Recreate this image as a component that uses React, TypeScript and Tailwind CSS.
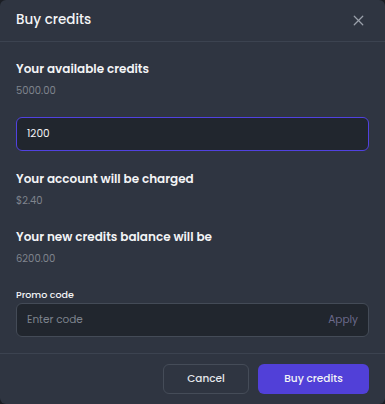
import { X } from "lucide-react";

const font = { fontFamily: "Poppins, Inter, 'Noto Sans', sans-serif" };

function Stat({ label, value }: { label: string; value: string }) {
  return (
    <div>
      <div className="text-[12px] leading-5 font-semibold text-[#f3f4f6]">{label}</div>
      <div className="mt-1 text-[10px] leading-4 text-[#7f848d]">{value}</div>
    </div>
  );
}

export default function App() {
  return (
    <div className="w-[385px] h-[404px] bg-[#1b1e24]" style={font}>
      <div className="flex h-full flex-col overflow-hidden rounded-md bg-[#2f3541]">
        {/* header */}
        <div className="flex h-[42px] shrink-0 items-center justify-between border-b border-[#3c4350] pl-4 pr-[18px]">
          <span className="text-[13.5px] font-medium text-[#f3f4f6]">Buy credits</span>
          <X size={17} strokeWidth={1.75} className="text-[#9aa0aa]" />
        </div>

        {/* body */}
        <div className="flex flex-1 flex-col px-4 pt-[17px]">
          <Stat label="Your available credits" value="5000.00" />

          <div className="mt-[18px] flex h-[34px] items-center rounded-md border border-[#5142e0] bg-[#21262e] px-[10px]">
            <span className="text-[10.5px] text-[#f3f4f6]">1200</span>
          </div>

          <div className="mt-[18px]">
            <Stat label="Your account will be charged" value="$2.40" />
          </div>
          <div className="mt-[18px]">
            <Stat label="Your new credits balance will be" value="6200.00" />
          </div>

          <div className="mt-5 text-[9.5px] leading-4 font-medium text-[#f3f4f6]">Promo code</div>
          <div className="flex h-[34px] items-center justify-between rounded-md border border-[#444b57] bg-[#21262e] px-[10px]">
            <span className="text-[10.5px] text-[#7d838d]">Enter code</span>
            <span className="text-[10.5px] text-[#6c6a8c]">Apply</span>
          </div>
        </div>

        {/* footer */}
        <div className="flex h-[51px] shrink-0 items-center justify-end gap-[9px] border-t border-[#3c4350] px-4 pb-[1px]">
          <button className="h-[30px] w-[86px] rounded-md border border-[#454c58] text-[10.5px] font-medium text-[#e5e7eb]">
            Cancel
          </button>
          <button className="h-[30px] w-[111px] rounded-md bg-[#5140d8] text-[10.5px] font-medium text-[#f3f4f6]">
            Buy credits
          </button>
        </div>
      </div>
    </div>
  );
}
